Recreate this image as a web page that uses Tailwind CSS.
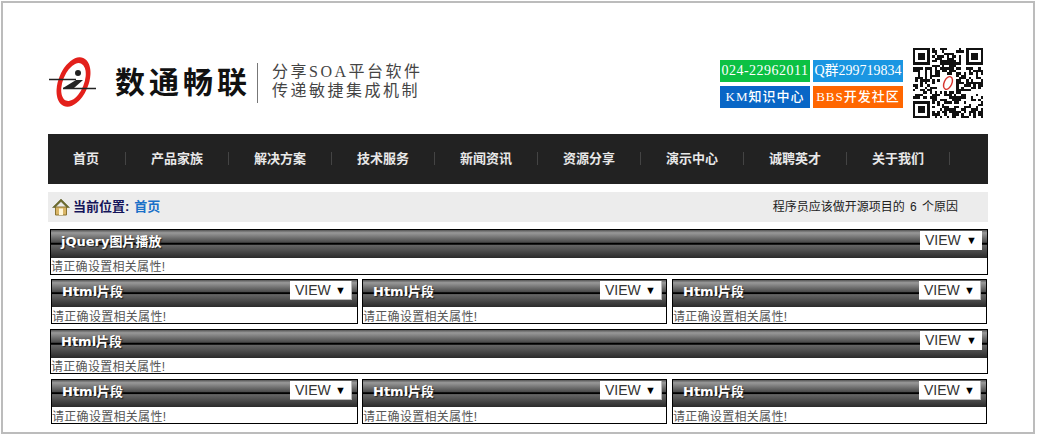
<!DOCTYPE html>
<html lang="en">
<head>
    <meta charset="UTF-8">
    <title>数通畅联</title>
    <script src="https://cdn.jsdelivr.net/npm/@tailwindcss/browser@4"></script>
</head>
<body class="bg-white overflow-hidden font-['Liberation_Sans','Noto_Sans_CJK_SC',sans-serif]">
    <div class="ml-[1px] mt-[1px] w-[1034px] h-[433px] border-2 border-[#bcbcbc] overflow-hidden">
        <div class="ml-[45px] w-[940px]">

            <!-- Header -->
            <div class="h-[131px] flex items-start">
                <svg class="ml-[1px] mt-[52px] shrink-0" width="48" height="54" viewBox="0 0 48 54">
                    <g transform="rotate(22 24.500 27)">
                        <path fill="#e3201b" fill-rule="evenodd" d="M24.500 1a15 26 0 1 0 .01 0zM24.500 7a10.500 20 0 1 1 -.01 0z"/>
                    </g>
                    <path d="M0 24.500H27M14 33.500H47" stroke="#222" stroke-width="1.500"/>
                    <path d="M14 33L27 25H34L25 33Z" fill="#222"/>
                    <circle cx="29" cy="18" r="3" fill="#222"/>
                </svg>
                <div class="ml-[18px] mt-[58px] text-[30px] leading-[44px] font-bold tracking-[4px] text-[#111] whitespace-nowrap">数通畅联</div>
                <div class="ml-[6px] mt-[60px] w-[1px] h-[40px] bg-[#777]"></div>
                <div class="ml-[14px] mt-[59px] text-[16px] leading-[19px] tracking-[2.500px] text-[#444] whitespace-nowrap font-['Liberation_Serif','Noto_Sans_CJK_SC',serif]">
                    <div>分享SOA平台软件</div>
                    <div>传递敏捷集成机制</div>
                </div>
                <div class="ml-auto mt-[57px] grid grid-cols-[90px_90px] gap-x-[3px] gap-y-[4px] text-white text-[13px] leading-[22px] text-center whitespace-nowrap font-['Liberation_Serif','Noto_Sans_CJK_SC',serif]">
                    <div class="h-[22px] bg-[#0cc144] text-[14px] tracking-[0.500px]">024-22962011</div>
                    <div class="h-[22px] bg-[#1a96e2] text-[14px]">Q群299719834</div>
                    <div class="h-[22px] bg-[#0866c6] font-medium tracking-[1px]">KM知识中心</div>
                    <div class="h-[22px] bg-[#ff6600] font-medium tracking-[1px]">BBS开发社区</div>
                </div>
                <svg class="ml-[10px] mr-[5px] mt-[45px] shrink-0" width="70" height="70" viewBox="0 0 29 29" shape-rendering="crispEdges">
                    <path id="qrDots" fill="#111" d=""/>
                    <path fill="#111" fill-rule="evenodd" d="M0 0h7v7h-7zM1 1v5h5v-5zM22 0h7v7h-7zM23 1v5h5v-5zM0 22h7v7h-7zM1 23v5h5v-5z"/>
                    <path fill="#111" d="M2 2h3v3h-3zM24 2h3v3h-3zM2 24h3v3h-3z"/>
                    <rect x="11" y="11" width="7" height="7" fill="#fff"/>
                    <ellipse cx="14.500" cy="14.500" rx="1.600" ry="2.800" transform="rotate(24 14.500 14.500)" fill="none" stroke="#d8342e" stroke-width="0.600" shape-rendering="auto"/>
                </svg>
            </div>

            <!-- Nav -->
            <div class="h-[50px] pb-[2px] bg-[#222222] flex items-center text-[13px] font-bold text-[#e8e8e8] whitespace-nowrap">
                <div class="w-[78px] pl-[25px] h-[13px] leading-[13px] border-r border-[#444]">首页</div>
                <div class="w-[103px] text-center h-[13px] leading-[13px] border-r border-[#444]">产品家族</div>
                <div class="w-[103px] text-center h-[13px] leading-[13px] border-r border-[#444]">解决方案</div>
                <div class="w-[103px] text-center h-[13px] leading-[13px] border-r border-[#444]">技术服务</div>
                <div class="w-[103px] text-center h-[13px] leading-[13px] border-r border-[#444]">新闻资讯</div>
                <div class="w-[103px] text-center h-[13px] leading-[13px] border-r border-[#444]">资源分享</div>
                <div class="w-[103px] text-center h-[13px] leading-[13px] border-r border-[#444]">演示中心</div>
                <div class="w-[103px] text-center h-[13px] leading-[13px] border-r border-[#444]">诚聘英才</div>
                <div class="w-[103px] text-center h-[13px] leading-[13px] border-r border-[#444]">关于我们</div>
            </div>

            <!-- Breadcrumb -->
            <div class="mt-[8px] h-[30px] bg-[#ececec] flex items-center text-[13px] whitespace-nowrap">
                <svg class="ml-[4px]" width="18" height="18" viewBox="0 0 18 18">
                    <path d="M3.500 9H14.500V17H3.500Z" fill="#d9b566" stroke="#8a7430"/>
                    <path d="M9 1L.5 9.500H3L9 3.500L15 9.500H17.500Z" fill="#6b6a2c" stroke="#5a5a24" stroke-width="0.500"/>
                    <path d="M7 10.500H11V17H7Z" fill="#fff6d8"/>
                </svg>
                <span class="ml-[3px] font-bold text-[#14145a]">当前位置:</span>
                <span class="ml-[5px] font-bold text-[#1a70c8]">首页</span>
                <span class="ml-auto mr-[30px] text-[12px] text-[#222] [word-spacing:2px]">程序员应该做开源项目的 6 个原因</span>
            </div>

            <!-- Modules -->
            <div class="mt-[7px] ml-[2px] h-[46px] border border-black flex flex-col">
                <div class="h-[28px] shrink-0 flex items-start bg-[linear-gradient(#555_0%,#999_10%,#4a4a4a_44%,#000_47%,#000_51%,#666_54%,#2a2a2a_100%)]">
                    <span class="ml-[10px] mt-[3px] text-[13px] leading-[18px] font-bold text-white font-['DejaVu_Sans','Noto_Sans_CJK_SC',sans-serif] [text-shadow:1px_1px_1px_#222]">jQuery图片播放</span>
                    <div class="ml-auto mr-[5px] mt-[1px] w-[62px] h-[19px] bg-white flex items-center justify-between pl-[5px] pr-[5px] text-[14px] text-[#333]"><span>VIEW</span><span class="text-[11px] text-black">▼</span></div>
                </div>
                <div class="mt-[1px] text-[12px] leading-[16px] tracking-[0.300px] text-[#555]">请正确设置相关属性!</div>
            </div>

            <div class="mt-[4px] ml-[3px] flex">
                <div class="w-[307px] h-[45px] border border-black flex flex-col">
                    <div class="h-[27px] shrink-0 flex items-start bg-[linear-gradient(#555_0%,#999_10%,#4a4a4a_44%,#000_47%,#000_51%,#666_54%,#2a2a2a_100%)]">
                        <span class="ml-[10px] mt-[3px] text-[13px] leading-[18px] font-bold text-white font-['DejaVu_Sans','Noto_Sans_CJK_SC',sans-serif] [text-shadow:1px_1px_1px_#222]">Html片段</span>
                        <div class="ml-auto mr-[5px] mt-[1px] w-[62px] h-[19px] bg-white border-r border-b border-[#bbb] flex items-center justify-between pl-[5px] pr-[5px] text-[14px] text-[#333]"><span>VIEW</span><span class="text-[11px] text-black">▼</span></div>
                    </div>
                    <div class="mt-[2px] text-[12px] leading-[16px] tracking-[0.300px] text-[#555]">请正确设置相关属性!</div>
                </div>
                <div class="ml-[4px] w-[305px] h-[45px] border border-black flex flex-col">
                    <div class="h-[27px] shrink-0 flex items-start bg-[linear-gradient(#555_0%,#999_10%,#4a4a4a_44%,#000_47%,#000_51%,#666_54%,#2a2a2a_100%)]">
                        <span class="ml-[10px] mt-[3px] text-[13px] leading-[18px] font-bold text-white font-['DejaVu_Sans','Noto_Sans_CJK_SC',sans-serif] [text-shadow:1px_1px_1px_#222]">Html片段</span>
                        <div class="ml-auto mr-[4px] mt-[1px] w-[62px] h-[19px] bg-white border-r border-b border-[#bbb] flex items-center justify-between pl-[5px] pr-[5px] text-[14px] text-[#333]"><span>VIEW</span><span class="text-[11px] text-black">▼</span></div>
                    </div>
                    <div class="mt-[2px] text-[12px] leading-[16px] tracking-[0.300px] text-[#555]">请正确设置相关属性!</div>
                </div>
                <div class="ml-[5px] w-[315px] h-[45px] border border-black flex flex-col">
                    <div class="h-[27px] shrink-0 flex items-start bg-[linear-gradient(#555_0%,#999_10%,#4a4a4a_44%,#000_47%,#000_51%,#666_54%,#2a2a2a_100%)]">
                        <span class="ml-[10px] mt-[3px] text-[13px] leading-[18px] font-bold text-white font-['DejaVu_Sans','Noto_Sans_CJK_SC',sans-serif] [text-shadow:1px_1px_1px_#222]">Html片段</span>
                        <div class="ml-auto mr-[5px] mt-[1px] w-[62px] h-[19px] bg-white border-r border-b border-[#bbb] flex items-center justify-between pl-[5px] pr-[5px] text-[14px] text-[#333]"><span>VIEW</span><span class="text-[11px] text-black">▼</span></div>
                    </div>
                    <div class="mt-[2px] text-[12px] leading-[16px] tracking-[0.300px] text-[#555]">请正确设置相关属性!</div>
                </div>
            </div>

            <div class="mt-[5px] ml-[2px] h-[45px] border border-black flex flex-col">
                <div class="h-[28px] shrink-0 flex items-start bg-[linear-gradient(#555_0%,#999_10%,#4a4a4a_44%,#000_47%,#000_51%,#666_54%,#2a2a2a_100%)]">
                    <span class="ml-[10px] mt-[3px] text-[13px] leading-[18px] font-bold text-white font-['DejaVu_Sans','Noto_Sans_CJK_SC',sans-serif] [text-shadow:1px_1px_1px_#222]">Html片段</span>
                    <div class="ml-auto mr-[5px] mt-[1px] w-[62px] h-[19px] bg-white flex items-center justify-between pl-[5px] pr-[5px] text-[14px] text-[#333]"><span>VIEW</span><span class="text-[11px] text-black">▼</span></div>
                </div>
                <div class="mt-[1px] text-[12px] leading-[16px] tracking-[0.300px] text-[#555]">请正确设置相关属性!</div>
            </div>

            <div class="mt-[5px] ml-[3px] flex">
                <div class="w-[307px] h-[45px] border border-black flex flex-col">
                    <div class="h-[27px] shrink-0 flex items-start bg-[linear-gradient(#555_0%,#999_10%,#4a4a4a_44%,#000_47%,#000_51%,#666_54%,#2a2a2a_100%)]">
                        <span class="ml-[10px] mt-[3px] text-[13px] leading-[18px] font-bold text-white font-['DejaVu_Sans','Noto_Sans_CJK_SC',sans-serif] [text-shadow:1px_1px_1px_#222]">Html片段</span>
                        <div class="ml-auto mr-[5px] mt-[1px] w-[62px] h-[19px] bg-white border-r border-b border-[#bbb] flex items-center justify-between pl-[5px] pr-[5px] text-[14px] text-[#333]"><span>VIEW</span><span class="text-[11px] text-black">▼</span></div>
                    </div>
                    <div class="mt-[2px] text-[12px] leading-[16px] tracking-[0.300px] text-[#555]">请正确设置相关属性!</div>
                </div>
                <div class="ml-[4px] w-[305px] h-[45px] border border-black flex flex-col">
                    <div class="h-[27px] shrink-0 flex items-start bg-[linear-gradient(#555_0%,#999_10%,#4a4a4a_44%,#000_47%,#000_51%,#666_54%,#2a2a2a_100%)]">
                        <span class="ml-[10px] mt-[3px] text-[13px] leading-[18px] font-bold text-white font-['DejaVu_Sans','Noto_Sans_CJK_SC',sans-serif] [text-shadow:1px_1px_1px_#222]">Html片段</span>
                        <div class="ml-auto mr-[4px] mt-[1px] w-[62px] h-[19px] bg-white border-r border-b border-[#bbb] flex items-center justify-between pl-[5px] pr-[5px] text-[14px] text-[#333]"><span>VIEW</span><span class="text-[11px] text-black">▼</span></div>
                    </div>
                    <div class="mt-[2px] text-[12px] leading-[16px] tracking-[0.300px] text-[#555]">请正确设置相关属性!</div>
                </div>
                <div class="ml-[5px] w-[315px] h-[45px] border border-black flex flex-col">
                    <div class="h-[27px] shrink-0 flex items-start bg-[linear-gradient(#555_0%,#999_10%,#4a4a4a_44%,#000_47%,#000_51%,#666_54%,#2a2a2a_100%)]">
                        <span class="ml-[10px] mt-[3px] text-[13px] leading-[18px] font-bold text-white font-['DejaVu_Sans','Noto_Sans_CJK_SC',sans-serif] [text-shadow:1px_1px_1px_#222]">Html片段</span>
                        <div class="ml-auto mr-[5px] mt-[1px] w-[62px] h-[19px] bg-white border-r border-b border-[#bbb] flex items-center justify-between pl-[5px] pr-[5px] text-[14px] text-[#333]"><span>VIEW</span><span class="text-[11px] text-black">▼</span></div>
                    </div>
                    <div class="mt-[2px] text-[12px] leading-[16px] tracking-[0.300px] text-[#555]">请正确设置相关属性!</div>
                </div>
            </div>
        </div>
    </div>

    <script>
        // QR dots are just a fixed pseudo random pattern
        let d = "", seed = 7;
        for (let y = 0; y < 29; y++) {
            for (let x = 0; x < 29; x++) {
                seed = (seed * 1103515245 + 12345) % 2147483648;
                let inFinder = (x < 8 && y < 8) || (x > 20 && y < 8) || (x < 8 && y > 20);
                if (!inFinder && (seed >> 16) % 100 < 52) d += `M${x} ${y}h1v1h-1z`;
            }
        }
        document.getElementById("qrDots").setAttribute("d", d);
    </script>
</body>
</html>
